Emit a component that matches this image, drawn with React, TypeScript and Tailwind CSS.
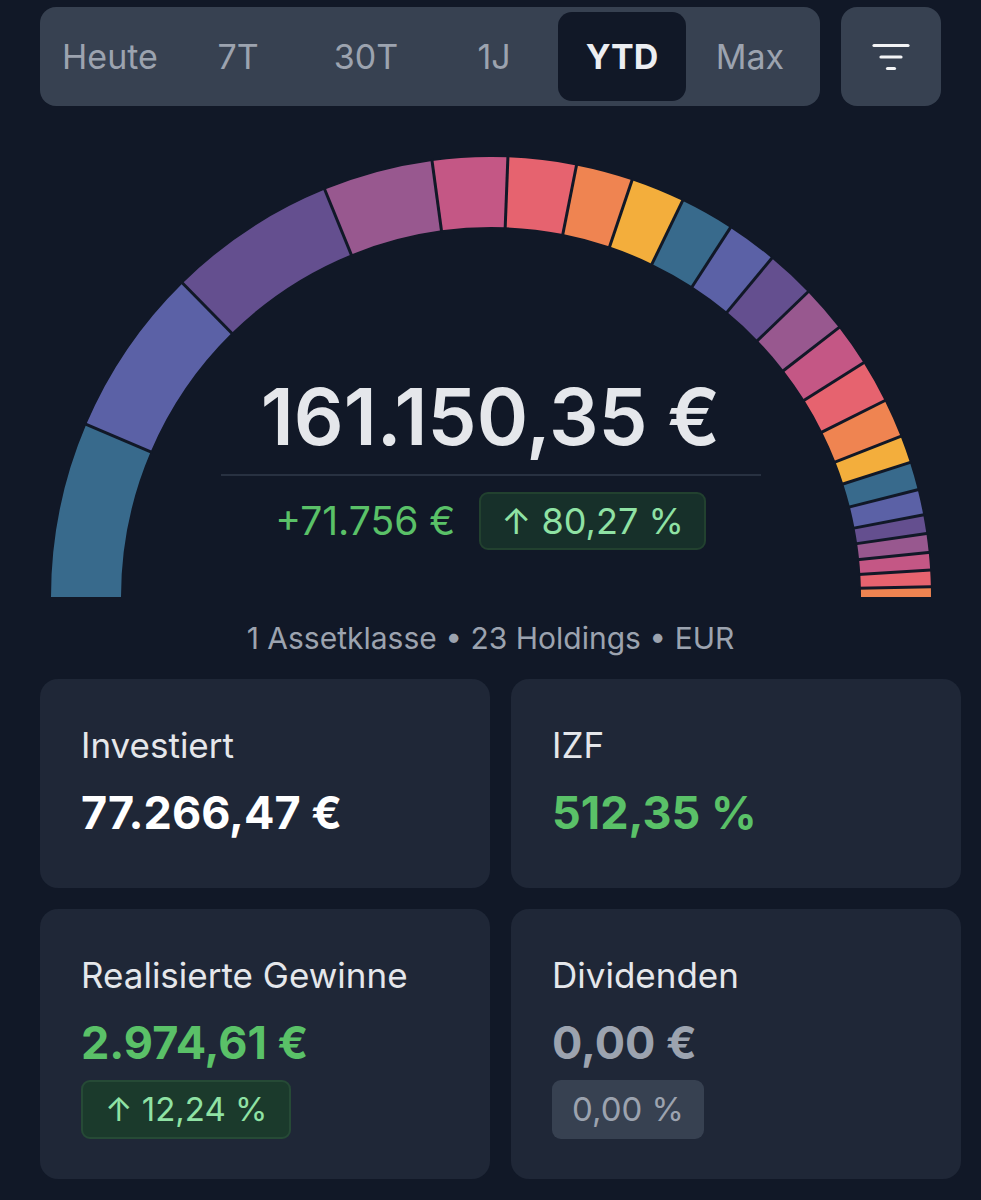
import React from 'react';

const tabs = ['Heute', '7T', '30T', '1J', 'YTD', 'Max'];

const palette = ['#386a8c', '#5b61a6', '#644f8f', '#98588f', '#c45785', '#e6636f', '#ef8451', '#f3ae3c'];

// segment borders in degrees, 0 = left end, 180 = right end
const stops = [0, 23.1, 45.5, 67.8, 82.3, 92.2, 101.2, 108.7, 115.8, 122.95, 129.65, 136.1, 142.25, 147.85, 153.5, 158.6, 162.2, 165.9, 169.25, 171.7, 174.2, 176.5, 178.65, 180];

const C = 440;
const R = 440;
const r = 370;

const pt = (rad: number, deg: number) => {
    const a = (deg * Math.PI) / 180;
    return [C - rad * Math.cos(a), C - rad * Math.sin(a)];
};

const segPath = (a0: number, a1: number) => {
    const [x0, y0] = pt(R, a0);
    const [x1, y1] = pt(R, a1);
    const [x2, y2] = pt(r, a1);
    const [x3, y3] = pt(r, a0);
    return `M${x0} ${y0} A${R} ${R} 0 0 1 ${x1} ${y1} L${x2} ${y2} A${r} ${r} 0 0 0 ${x3} ${y3} Z`;
};

const Gauge: React.FC = () => (
    <svg className="absolute inset-0" width="880" height="440" viewBox="0 0 880 440">
        {stops.slice(0, -1).map((a, i) => (
            <path key={i} d={segPath(a, stops[i + 1])} fill={palette[i % 8]} />
        ))}
        {stops.slice(1, -1).map((a, i) => {
            const [x0, y0] = pt(r - 2, a);
            const [x1, y1] = pt(R + 2, a);
            return <line key={i} x1={x0} y1={y0} x2={x1} y2={y1} stroke="#111827" strokeWidth="3" />;
        })}
    </svg>
);

const FilterIcon = () => (
    <svg width="40" height="30" viewBox="0 0 40 30" fill="none" stroke="#f3f4f6" strokeWidth="3.2" strokeLinecap="round">
        <line x1="3" y1="3.5" x2="37" y2="3.5" />
        <line x1="10" y1="15" x2="30" y2="15" />
        <line x1="16.5" y1="26.5" x2="23.5" y2="26.5" />
    </svg>
);

const Card: React.FC<{ label: string; bottom?: string; children: React.ReactNode }> = ({ label, bottom = 'pb-[50px]', children }) => (
    <div className={`bg-[#1f2737] rounded-[18px] pl-[41px] pr-6 pt-[46px] flex flex-col ${bottom}`}>
        <div className="text-[35px] leading-[40px] text-[#e5e7eb]">{label}</div>
        {children}
    </div>
);

const valueCls = 'text-[45px] leading-[50px] font-bold mt-[23px]';

export default function App() {
    return (
        <div className="w-[981px] h-[1200px] bg-[#111827] overflow-hidden" style={{ fontFamily: 'Inter, "Noto Sans", sans-serif' }}>
            <div className="flex gap-[21px] pl-[40px] pr-[40px] pt-[7px]">
                <div className="flex-1 h-[99px] bg-[#374151] rounded-[16px] flex items-center px-[6px]">
                    {tabs.map((t) => (
                        <div
                            key={t}
                            className={`flex-1 h-[89px] rounded-[14px] flex items-center justify-center text-[34px] ${t === 'YTD' ? 'bg-[#111827] text-[#eceef2] font-bold' : 'text-[#9ca3af]'}`}
                        >
                            {t}
                        </div>
                    ))}
                </div>
                <div className="w-[100px] h-[99px] bg-[#374151] rounded-[16px] flex items-center justify-center">
                    <FilterIcon />
                </div>
            </div>

            <div className="relative w-[880px] h-[440px] mx-auto mt-[51px] flex flex-col items-center justify-end pb-[47px]">
                <Gauge />
                <div className="relative text-[78px] leading-none font-semibold text-[#e5e7eb]">161.150,35 €</div>
                <div className="relative w-[540px] h-[2px] bg-[#283141] mt-[18px]" />
                <div className="relative flex items-center gap-[24px] mt-[16px]">
                    <span className="text-[39px] text-[#5ac168]">+71.756 €</span>
                    <span className="h-[58px] px-[20px] flex items-center rounded-[9px] bg-[#17302a] border-2 border-[#22412f] text-[36px] text-[#8fe2a4]">↑ 80,27 %</span>
                </div>
            </div>

            <div className="text-center text-[30px] leading-[36px] text-[#9ca3af] mt-[23px]">1 Assetklasse • 23 Holdings • EUR</div>

            <div className="grid grid-cols-2 gap-[21px] pl-[40px] pr-[20px] mt-[23px]">
                <Card label="Investiert">
                    <div className={`${valueCls} text-white`}>77.266,47 €</div>
                </Card>
                <Card label="IZF">
                    <div className={`${valueCls} text-[#5ac168]`}>512,35 %</div>
                </Card>
                <Card label="Realisierte Gewinne" bottom="pb-[40px]">
                    <div className={`${valueCls} text-[#5ac168]`}>2.974,61 €</div>
                    <div className="self-start mt-[12px] h-[59px] px-[22px] flex items-center rounded-[9px] bg-[#1b3a2c] border-2 border-[#264a36] text-[33px] text-[#8fe2a4]">↑ 12,24 %</div>
                </Card>
                <Card label="Dividenden" bottom="pb-[40px]">
                    <div className={`${valueCls} text-[#9ca3af]`}>0,00 €</div>
                    <div className="self-start mt-[12px] h-[59px] px-[20px] flex items-center rounded-[9px] bg-[#374151] text-[33px] text-[#9ca3af]">0,00 %</div>
                </Card>
            </div>
        </div>
    );
}
